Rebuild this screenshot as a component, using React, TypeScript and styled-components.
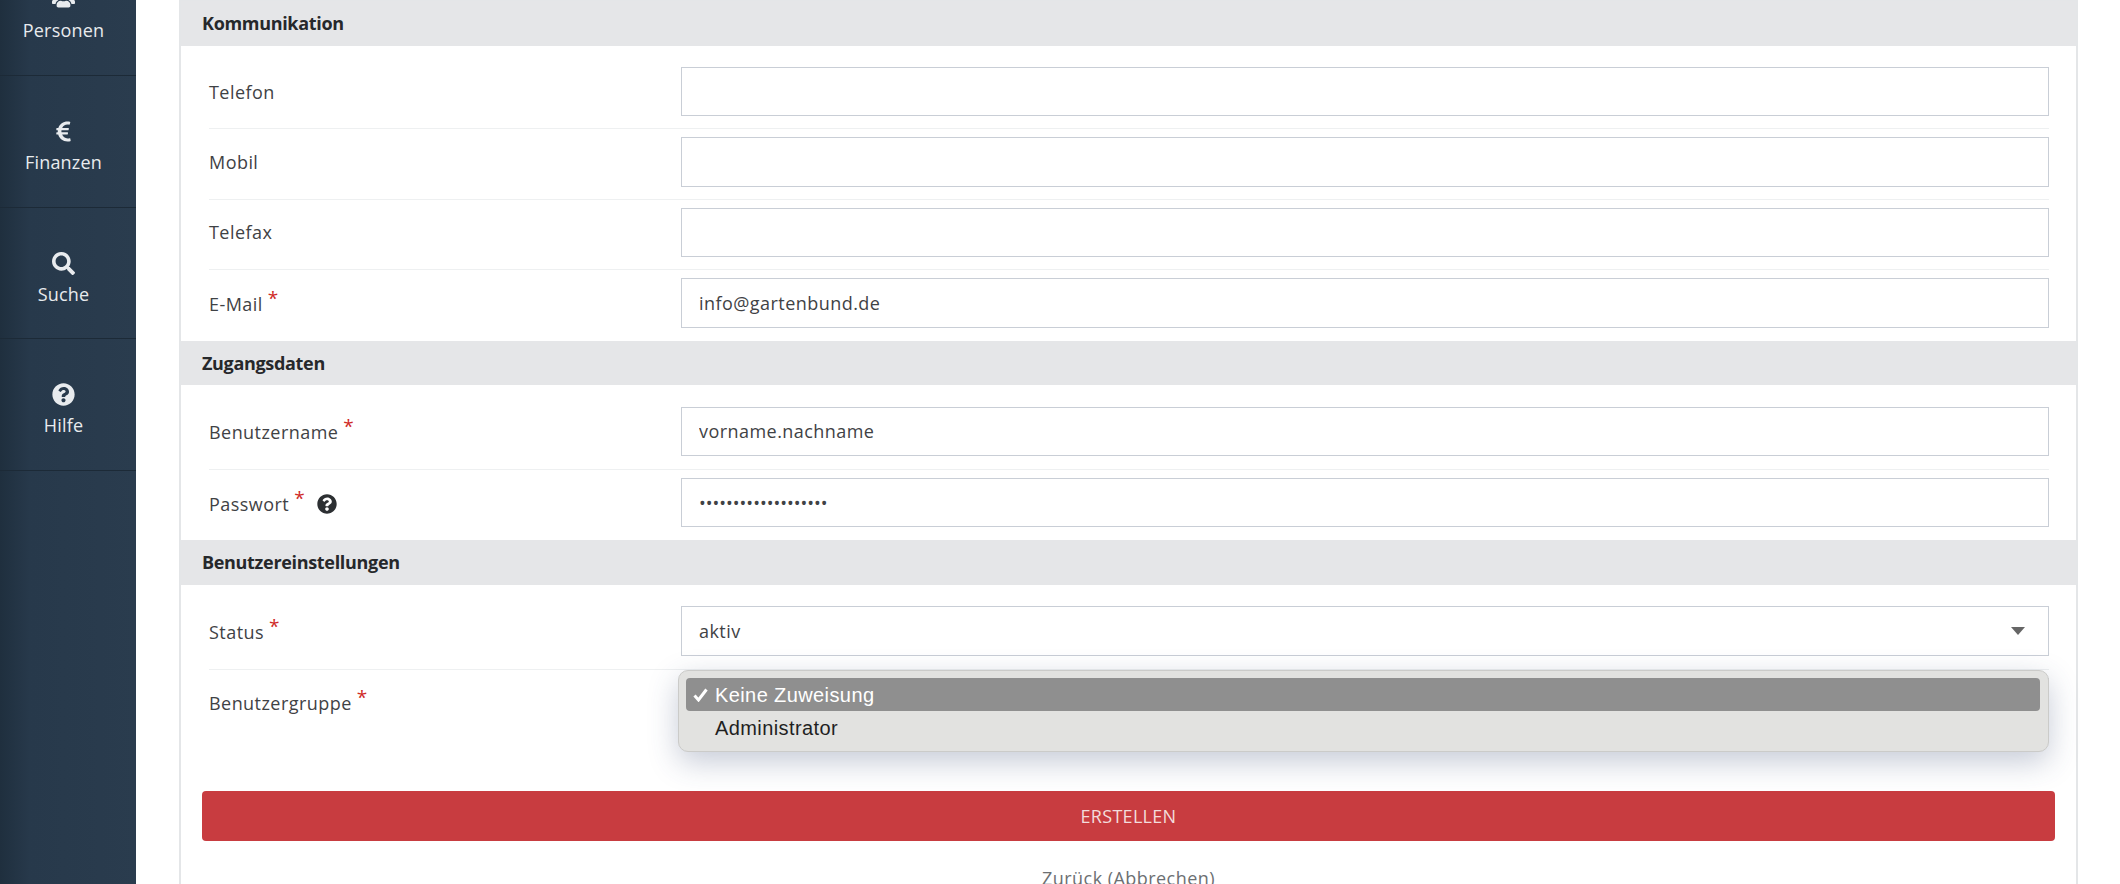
import styled, { createGlobalStyle } from "styled-components";
import { FaEuroSign, FaQuestionCircle, FaSearch, FaUsers } from "react-icons/fa";

const GlobalStyle = createGlobalStyle`
  html, body {
    margin: 0;
    padding: 0;
    height: 884px;
    overflow: hidden;
    background: #ffffff;
    font-family: "Open Sans", "Noto Sans", sans-serif;
  }
  * {
    box-sizing: border-box;
  }
`;

const navItems = [
  { title: "Finanzen", icon: <FaEuroSign /> },
  { title: "Suche", icon: <FaSearch /> },
  { title: "Hilfe", icon: <FaQuestionCircle /> },
];

type FieldProps = {
  label: string;
  required?: boolean;
  hint?: boolean;
  value?: string;
  type?: string;
  last?: boolean;
};

const Field = ({ label, required, hint, value, type, last }: FieldProps) => (
  <Row $required={required} $last={last}>
    <Label $required={required}>
      {label}
      {required && <Star>*</Star>}
      {hint && (
        <Hint>
          <FaQuestionCircle />
        </Hint>
      )}
    </Label>
    <Input type={type || "text"} defaultValue={value} />
  </Row>
);

const App = () => {
  return (
    <Page>
      <GlobalStyle />
      <Sidebar>
        <FirstItem>
          <NavIcon $clipped>
            <FaUsers />
          </NavIcon>
          <NavTitle>Personen</NavTitle>
        </FirstItem>
        {navItems.map((item) => (
          <NavItem key={item.title}>
            <NavIcon>{item.icon}</NavIcon>
            <NavTitle>{item.title}</NavTitle>
          </NavItem>
        ))}
      </Sidebar>
      <Main>
        <Card>
          <SectionTitle>Kommunikation</SectionTitle>
          <Rows>
            <Field label="Telefon" />
            <Field label="Mobil" />
            <Field label="Telefax" />
            <Field label="E-Mail" required value="info@gartenbund.de" last />
          </Rows>
          <SectionTitle>Zugangsdaten</SectionTitle>
          <Rows>
            <Field label="Benutzername" required value="vorname.nachname" />
            <Field label="Passwort" required hint type="password" value="aaaaaaaaaaaaaaaaaaa" last />
          </Rows>
          <SectionTitle>Benutzereinstellungen</SectionTitle>
          <Rows>
            <Row $required>
              <Label $required>
                Status<Star>*</Star>
              </Label>
              <SelectBox>
                aktiv
                <Arrow width="14" height="8" viewBox="0 0 14 8">
                  <path d="M0 0h14L7 8z" fill="#666" />
                </Arrow>
              </SelectBox>
            </Row>
            <Row $required $last>
              <Label $required>
                Benutzergruppe<Star>*</Star>
              </Label>
              <SelectWrap>
                <SelectBox />
                <Popup>
                  <Option $selected>
                    <Check width="15" height="14" viewBox="0 0 15 14">
                      <path d="M1.5 7.5l4 4.5L13.5 1.5" fill="none" stroke="#fff" strokeWidth="3" />
                    </Check>
                    Keine Zuweisung
                  </Option>
                  <Option>Administrator</Option>
                </Popup>
              </SelectWrap>
            </Row>
          </Rows>
          <Actions>
            <SubmitButton>ERSTELLEN</SubmitButton>
            <BackLink>Zurück (Abbrechen)</BackLink>
          </Actions>
        </Card>
      </Main>
    </Page>
  );
};

export default App;

const Page = styled.div`
  display: flex;
  width: 2120px;
  height: 884px;
  overflow: hidden;
`;

const Sidebar = styled.nav`
  width: 136px;
  flex-shrink: 0;
  height: 884px;
  color: #e8ebee;
  background: linear-gradient(90deg, #1f2f3e 0, #27394b 30px, #2a3c4e 100%);
`;

const NavItem = styled.div`
  display: flex;
  flex-direction: column;
  align-items: center;
  height: 131.5px;
  padding: 44px 9px 0 0;
  border-bottom: 1px solid #1c2a37;
`;

const FirstItem = styled(NavItem)`
  height: 76px;
  padding-top: 0;
`;

const NavIcon = styled.div<{ $clipped?: boolean }>`
  height: 24px;
  font-size: 23px;
  line-height: 24px;
  margin-top: ${(p) => (p.$clipped ? "-12px" : "0")};
  margin-bottom: 7px;
  svg {
    display: block;
  }
`;

const NavTitle = styled.div`
  font-size: 18px;
  line-height: 22px;
  letter-spacing: 0.2px;
`;

const Main = styled.main`
  flex: 1;
  padding: 0 42px 0 43px;
`;

const Card = styled.div`
  height: 900px;
  border: 2px solid #e4e6e8;
  border-top-width: 1px;
  border-bottom: 0;
`;

const SectionTitle = styled.h3`
  margin: 0;
  height: 44.5px;
  padding-left: 21px;
  background: #e5e6e8;
  color: #26282b;
  font-size: 18px;
  font-weight: 700;
  line-height: 45px;
  letter-spacing: -0.32px;
`;

const Rows = styled.div`
  padding: 13.5px 27px 0 28px;
`;

const Row = styled.div<{ $required?: boolean; $last?: boolean }>`
  display: grid;
  grid-template-columns: 472px 1fr;
  align-items: center;
  padding: 8px 0 ${(p) => (p.$required ? "13px" : "12px")};
  border-bottom: ${(p) => (p.$last ? "0" : "1px solid #eef0f1")};
`;

const Label = styled.label<{ $required?: boolean }>`
  display: flex;
  align-items: center;
  padding-top: ${(p) => (p.$required ? "2px" : "0")};
  color: #3f4245;
  font-size: 18px;
  letter-spacing: 0.45px;
`;

const Star = styled.span`
  align-self: flex-start;
  margin: -4px 0 0 5px;
  color: #cf2a27;
  font-size: 19px;
  line-height: 20px;
`;

const Hint = styled.span`
  display: flex;
  margin-left: 12px;
  color: #2c2f32;
  font-size: 20px;
`;

const Input = styled.input`
  width: 100%;
  height: 49.4px;
  padding: 0 17px;
  border: 1.5px solid #c9ced6;
  border-radius: 0;
  outline: 0;
  background: #ffffff;
  color: #3f4245;
  font-family: inherit;
  font-size: 18px;
  letter-spacing: 0.45px;
  &[type="password"] {
    letter-spacing: 0;
  }
`;

const SelectWrap = styled.div`
  position: relative;
`;

const SelectBox = styled.div`
  display: flex;
  align-items: center;
  justify-content: space-between;
  height: 49.4px;
  padding: 0 23px 0 17px;
  border: 1.5px solid #c9ced6;
  color: #3f4245;
  font-size: 18px;
  letter-spacing: 0.45px;
`;

const Arrow = styled.svg`
  display: block;
`;

const Popup = styled.div`
  position: absolute;
  top: -8px;
  left: -3px;
  right: 0;
  height: 82px;
  padding: 7px 8px 0 7px;
  border: 1.5px solid #cbcbc9;
  border-radius: 10px;
  background: #e2e2e0;
  box-shadow: 0 10px 30px rgba(50, 70, 110, 0.28);
  font-family: "Liberation Sans", Arial, sans-serif;
`;

const Option = styled.div<{ $selected?: boolean }>`
  position: relative;
  height: 33px;
  padding-left: 29px;
  border-radius: 4px;
  background: ${(p) => (p.$selected ? "#8f8f8f" : "transparent")};
  color: ${(p) => (p.$selected ? "#ffffff" : "#1f1f1f")};
  font-size: 20px;
  letter-spacing: 0.4px;
  line-height: 34px;
`;

const Check = styled.svg`
  position: absolute;
  top: 10px;
  left: 7px;
`;

const Actions = styled.div`
  display: flex;
  flex-direction: column;
  align-items: center;
  padding: 51px 21px 0 21px;
`;

const SubmitButton = styled.button`
  width: 100%;
  height: 50px;
  border: 0;
  border-radius: 4px;
  background: #c83c40;
  color: #f3dcdc;
  font-family: inherit;
  font-size: 18px;
  letter-spacing: 0.3px;
`;

const BackLink = styled.a`
  margin-top: 25px;
  color: #6c6f72;
  font-size: 18px;
  letter-spacing: 0.45px;
`;
